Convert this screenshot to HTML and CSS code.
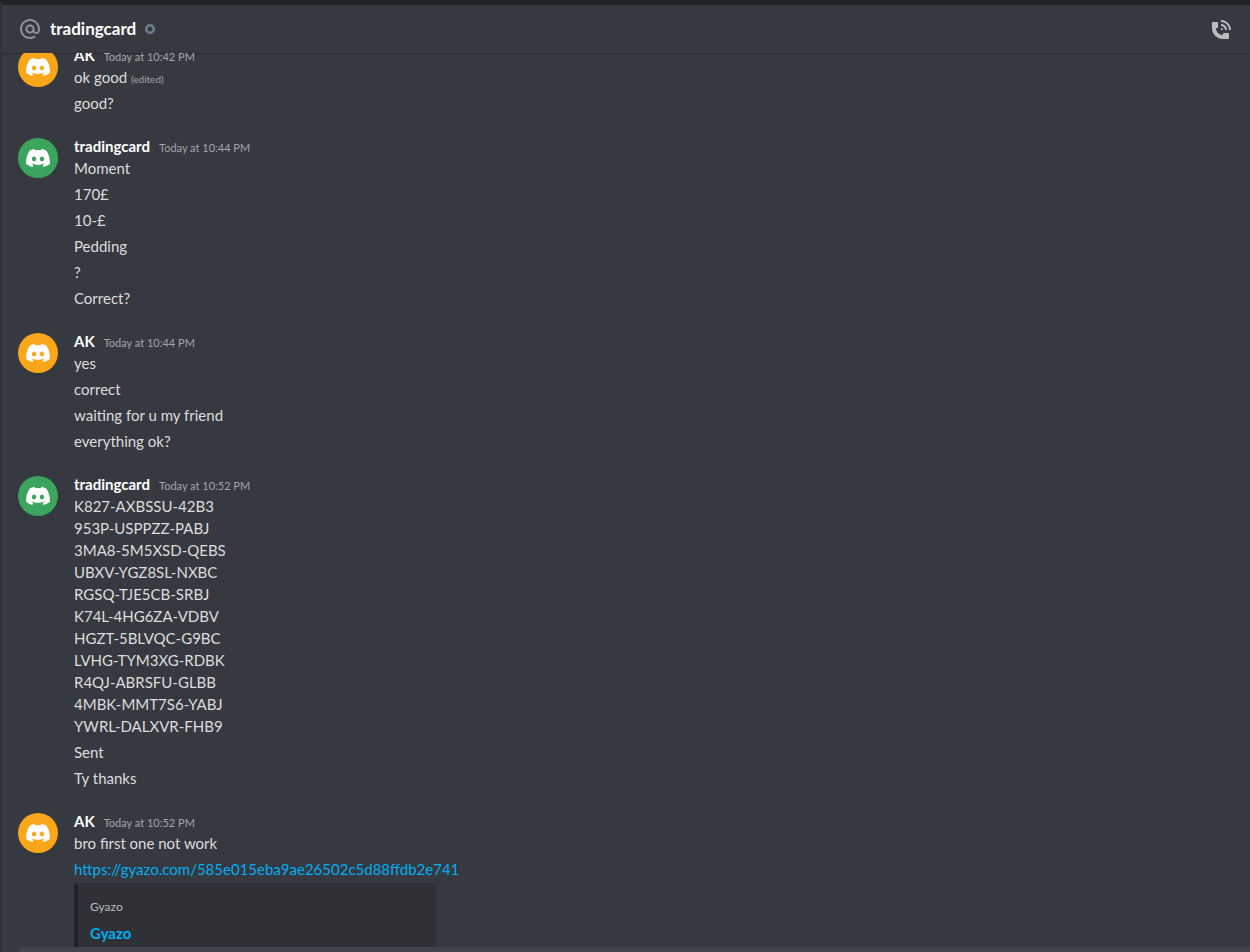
FILE: index.html
```
<!DOCTYPE html>
<html lang="en">
<head>
    <meta charset="UTF-8">
    <meta name="viewport" content="width=device-width, initial-scale=1.0">
    <title>tradingcard</title>
    <link rel="stylesheet" href="styles.css">
</head>
<body>
    <svg class="symbols" aria-hidden="true">
        <symbol id="logo" viewBox="0 0 127.14 96.36">
            <path d="M107.7,8.07A105.15,105.15,0,0,0,81.47,0a72.06,72.06,0,0,0-3.36,6.83A97.68,97.68,0,0,0,49,6.83,72.37,72.37,0,0,0,45.64,0,105.89,105.89,0,0,0,19.39,8.09C2.79,32.65-1.71,56.6.54,80.21h0A105.73,105.73,0,0,0,32.71,96.36,77.7,77.7,0,0,0,39.6,85.25a68.42,68.42,0,0,1-10.85-5.18c.91-.66,1.8-1.34,2.66-2a75.57,75.57,0,0,0,64.32,0c.87.71,1.76,1.39,2.66,2a68.68,68.68,0,0,1-10.87,5.19,77,77,0,0,0,6.89,11.1A105.25,105.25,0,0,0,126.6,80.22h0C129.24,52.84,122.09,29.11,107.7,8.07ZM42.45,65.69C36.18,65.69,31,60,31,53s5-12.74,11.43-12.74S54,46,53.89,53,48.84,65.69,42.45,65.69Zm42.24,0C78.41,65.69,73.25,60,73.25,53s5-12.74,11.44-12.74S96.23,46,96.12,53,91,65.69,84.69,65.69Z"/>
        </symbol>
    </svg>

    <header class="topbar">
        <svg class="icon at" viewBox="0 0 24 24" aria-hidden="true">
            <path d="M12 2C6.486 2 2 6.486 2 12C2 17.515 6.486 22 12 22C14.039 22 15.993 21.398 17.652 20.259L16.521 18.611C15.195 19.519 13.633 20 12 20C7.589 20 4 16.411 4 12C4 7.589 7.589 4 12 4C16.411 4 20 7.589 20 12V12.782C20 14.17 19.402 15 18.4 15L18.398 15.018C18.338 15.005 18.273 15 18.209 15H18C17.437 15 16.6 14.182 16.6 13.631V12C16.6 9.464 14.537 7.4 12 7.4C9.463 7.4 7.4 9.463 7.4 12C7.4 14.537 9.463 16.6 12 16.6C13.234 16.6 14.35 16.106 15.177 15.313C15.826 16.269 16.93 17 18 17L18.002 16.981C18.064 16.994 18.129 17 18.195 17H18.4C20.552 17 22 15.306 22 12.782V12C22 6.486 17.514 2 12 2ZM12 14.599C10.566 14.599 9.4 13.433 9.4 11.999C9.4 10.565 10.566 9.399 12 9.399C13.434 9.399 14.6 10.565 14.6 11.999C14.6 13.433 13.434 14.599 12 14.599Z"/>
        </svg>
        <h1>tradingcard</h1>
        <svg class="status" viewBox="0 0 10 10" aria-hidden="true"><circle cx="5" cy="5" r="3.75"/></svg>
        <button class="call" type="button" aria-label="Start voice call">
            <svg class="icon" viewBox="0 0 24 24" aria-hidden="true">
                <path d="M11 5V3C16.515 3 21 7.486 21 13H19C19 8.589 15.411 5 11 5ZM17 13H15C15 10.795 13.206 9 11 9V7C14.309 7 17 9.692 17 13ZM11 11V13H13C13 11.896 12.105 11 11 11ZM14 16H18C18.553 16 19 16.447 19 17V21C19 21.553 18.553 22 18 22H13C6.925 22 2 17.075 2 11V6C2 5.447 2.448 5 3 5H7C7.553 5 8 5.447 8 6V10C8 10.553 7.553 11 7 11H6C6.063 14.938 9 18 13 18V17C13 16.447 13.447 16 14 16Z"/>
            </svg>
        </button>
    </header>

    <main class="messages">
        <article class="group">
            <div class="avatar orange"><svg><use href="#logo"/></svg></div>
            <div class="content">
                <h2>AK <time>Today at 10:42 PM</time></h2>
                <p>ok good <small>(edited)</small></p>
                <p>good?</p>
            </div>
        </article>

        <article class="group">
            <div class="avatar green"><svg><use href="#logo"/></svg></div>
            <div class="content">
                <h2>tradingcard <time>Today at 10:44 PM</time></h2>
                <p>Moment</p>
                <p>170£</p>
                <p>10-£</p>
                <p>Pedding</p>
                <p>?</p>
                <p>Correct?</p>
            </div>
        </article>

        <article class="group">
            <div class="avatar orange"><svg><use href="#logo"/></svg></div>
            <div class="content">
                <h2>AK <time>Today at 10:44 PM</time></h2>
                <p>yes</p>
                <p>correct</p>
                <p>waiting for u my friend</p>
                <p>everything ok?</p>
            </div>
        </article>

        <article class="group">
            <div class="avatar green"><svg><use href="#logo"/></svg></div>
            <div class="content">
                <h2>tradingcard <time>Today at 10:52 PM</time></h2>
                <p>K827-AXBSSU-42B3<br>
                953P-USPPZZ-PABJ<br>
                3MA8-5M5XSD-QEBS<br>
                UBXV-YGZ8SL-NXBC<br>
                RGSQ-TJE5CB-SRBJ<br>
                K74L-4HG6ZA-VDBV<br>
                HGZT-5BLVQC-G9BC<br>
                LVHG-TYM3XG-RDBK<br>
                R4QJ-ABRSFU-GLBB<br>
                4MBK-MMT7S6-YABJ<br>
                YWRL-DALXVR-FHB9</p>
                <p>Sent</p>
                <p>Ty thanks</p>
            </div>
        </article>

        <article class="group">
            <div class="avatar orange"><svg><use href="#logo"/></svg></div>
            <div class="content">
                <h2>AK <time>Today at 10:52 PM</time></h2>
                <p>bro first one not work</p>
                <p><a href="https://gyazo.com/585e015eba9ae26502c5d88ffdb2e741">https://gyazo.com/585e015eba9ae26502c5d88ffdb2e741</a></p>
                <div class="embed">
                    <span class="provider">Gyazo</span>
                    <a class="embed-title" href="https://gyazo.com/585e015eba9ae26502c5d88ffdb2e741">Gyazo</a>
                </div>
            </div>
        </article>
    </main>

    <input class="composer" type="text" aria-label="Message @tradingcard">
</body>
</html>
```
FILE: styles.css
```
* {
    box-sizing: border-box;
}

body {
    margin: 0;
    height: 100vh;
    display: flex;
    flex-direction: column;
    overflow: hidden;
    background: #36393f;
    border-top: 5px solid #202225;
    border-left: 2px solid #2f3136;
    color: #dcddde;
    font-family: Lato, "Noto Sans", sans-serif;
    font-size: 15px;
    line-height: 22px;
}

.symbols {
    display: none;
}

.topbar {
    flex: none;
    display: flex;
    align-items: center;
    height: 48px;
    padding: 0 16px;
    box-shadow: 0 1px 0 #2a2c31;
}

.topbar h1 {
    margin: 0 9px 0 8px;
    color: #fff;
    font-size: 17px;
    font-weight: 700;
}

.icon {
    display: block;
    width: 24px;
    height: 24px;
    fill: currentColor;
}

.at {
    color: #8e9297;
}

.status {
    width: 10px;
    height: 10px;
    fill: none;
    stroke: #747f8d;
    stroke-width: 2.5;
}

.call {
    margin-left: auto;
    padding: 0;
    border: none;
    background: none;
    color: #b9bbbe;
    cursor: pointer;
}

/* newest message stays at the bottom, older ones slide under the header */
.messages {
    flex: 1;
    min-height: 0;
    display: flex;
    flex-direction: column;
    justify-content: flex-end;
    gap: 17px;
    overflow: hidden;
}

.group {
    flex: none;
    display: flex;
    gap: 16px;
    padding: 1px 16px 0;
}

.group:not(:last-child) {
    padding-bottom: 3px;
}

.avatar {
    flex: none;
    display: flex;
    align-items: center;
    justify-content: center;
    width: 40px;
    height: 40px;
    margin-top: 3px;
    border-radius: 50%;
}

.avatar svg {
    width: 24px;
    height: 18px;
    fill: #fff;
}

.orange {
    background: #faa61a;
}

.green {
    background: #3ba55d;
}

.content {
    flex: 1;
    min-width: 0;
}

.content h2 {
    display: flex;
    align-items: baseline;
    gap: 9px;
    height: 22px;
    margin: 0;
    color: #fff;
    font-size: 15px;
    font-weight: 700;
}

.content time {
    color: #a3a6aa;
    font-size: 11px;
    font-weight: 400;
    line-height: 16px;
}

.content p {
    margin: 0;
}

.content p + p {
    margin-top: 4px;
}

.content small {
    color: #a3a6aa;
    font-size: 10px;
    line-height: 16px;
}

a {
    color: #00aff4;
    text-decoration: none;
}

a:hover {
    text-decoration: underline;
}

.embed {
    display: flex;
    flex-direction: column;
    gap: 7px;
    max-width: 362px;
    margin-top: 3px;
    padding: 16px 12px 3px;
    background: #2f3136;
    border-left: 4px solid #202225;
    border-radius: 4px 4px 0 0;
}

.provider {
    color: #b9bbbe;
    font-size: 12px;
    line-height: 16px;
}

.embed-title {
    font-weight: 700;
}

.composer {
    flex: none;
    height: 5px;
    margin-left: 16px;
    padding: 0 16px;
    border: none;
    border-radius: 8px 0 0 0;
    background: #40444b;
    color: #dcddde;
    outline: none;
}
```
